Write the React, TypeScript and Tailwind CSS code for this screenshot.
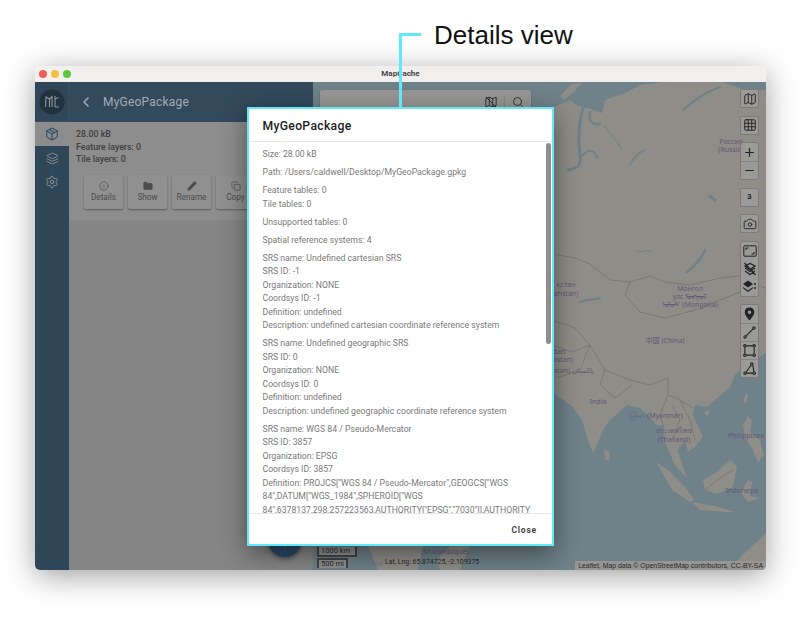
import { ChevronLeft, Copy, Folder, Info, Layers, Map as MapIcon, Minus, Pencil, Plus, Camera, Search, Settings, Grid3x3, Package } from "lucide-react";
import type { ReactNode } from "react";

const blocks: string[][] = [
  ["Size: 28.00 kB"],
  ["Path: /Users/caldwell/Desktop/MyGeoPackage.gpkg"],
  ["Feature tables: 0", "Tile tables: 0"],
  ["Unsupported tables: 0"],
  ["Spatial reference systems: 4"],
  ["SRS name: Undefined cartesian SRS", "SRS ID: -1", "Organization: NONE", "Coordsys ID: -1", "Definition: undefined", "Description: undefined cartesian coordinate reference system"],
  ["SRS name: Undefined geographic SRS", "SRS ID: 0", "Organization: NONE", "Coordsys ID: 0", "Definition: undefined", "Description: undefined geographic coordinate reference system"],
  ["SRS name: WGS 84 / Pseudo-Mercator", "SRS ID: 3857", "Organization: EPSG", "Coordsys ID: 3857", "Definition: PROJCS[\"WGS 84 / Pseudo-Mercator\",GEOGCS[\"WGS", "84\",DATUM[\"WGS_1984\",SPHEROID[\"WGS", "84\",6378137,298.257223563,AUTHORITY[\"EPSG\",\"7030\"]],AUTHORITY"],
];

const actions = [
  { label: "Details", icon: <Info size={10} strokeWidth={1.5} /> },
  { label: "Show", icon: <Folder size={10} fill="currentColor" /> },
  { label: "Rename", icon: <Pencil size={10} fill="currentColor" /> },
  { label: "Copy", icon: <Copy size={10} strokeWidth={1.5} /> },
];

function Ctl({ children }: { children: ReactNode }) {
  return (
    <div className="w-[19px] h-[19px] flex items-center justify-center text-[#222] bg-[#9a9a98] rounded-[2px] border border-[#7b7b79]">
      {children}
    </div>
  );
}

function Cell({ children, line }: { children: ReactNode; line?: boolean }) {
  return (
    <div className={`w-full h-[18px] flex items-center justify-center text-[#222] ${line ? "border-t border-[#858583]" : ""}`}>
      {children}
    </div>
  );
}

function Group({ children }: { children: ReactNode }) {
  return <div className="w-[19px] rounded-[2px] border border-[#7b7b79] bg-[#9a9a98] flex flex-col items-center">{children}</div>;
}

function Vec({ d, dots }: { d: string; dots: number[][] }) {
  return (
    <svg width="13" height="13" viewBox="0 0 14 14" fill="none" stroke="currentColor" strokeWidth="1.2">
      <path d={d} />
      {dots.map(([x, y]) => (
        <circle key={`${x}-${y}`} cx={x} cy={y} r="1.3" />
      ))}
    </svg>
  );
}

function MapLayer() {
  return (
    <svg viewBox="313 82 453 488" className="block w-full h-full" fontFamily="'Noto Sans','Noto Sans CJK SC',sans-serif">
      <rect x="313" y="82" width="453" height="488" fill="#6f8189" />
      <g fill="#8f8d88">
        <path d="M540,130 L552,108 L570,100 L578,106 L588,108 L602,113 L605,100 L625,93 L640,85 L665,82 L722,82 L745,90 L766,90 L766,353 L745,365 L735,375 L730,387 L715,400 L707,407 L695,405 L693,415 L703,437 L695,447 L688,452 L685,440 L677,450 L687,478 L675,465 L666,445 L663,425 L657,425 L650,417 L640,408 L627,405 L610,420 L603,430 L595,450 L593,453 L588,440 L582,420 L573,407 L563,400 L553,393 L540,393 Z" />
        <path d="M656,462 L668,470 L686,488 L694,500 L690,502 L672,490 Z" />
        <path d="M692,502 L715,506 L735,512 L752,512 L725,512 L700,510 Z" />
        <path d="M703,480 L717,472 L730,460 L737,466 L733,487 L717,494 L705,490 Z" />
        <path d="M741,492 L748,480 L752,482 L750,496 L760,498 L748,502 L744,497 Z" />
        <path d="M743,425 L748,416 L752,420 L750,432 L760,440 L764,455 L758,462 L752,448 L745,438 Z" />
        <path d="M604,449 L609,452 L610,459 L605,460 Z" />
        <path d="M703,412 L710,410 L708,416 Z" />
        <path d="M743,400 L747,392 L748,398 L745,404 Z" />
        <path d="M727,570 L750,548 L766,533 L766,570 Z" />
        <path d="M560,96 L572,84 L582,82 L574,92 L564,100 Z" />
        <path d="M368,546 L423,546 L418,570 L378,570 Z" />
        <path d="M437,560 L450,546 L470,546 L460,570 L440,570 Z" />
      </g>
      <g fill="none" stroke="#6f8189" strokeLinecap="round">
        <path d="M583,108 C578,125 578,140 580,155 C582,168 575,168 568,170" strokeWidth="3" />
        <path d="M583,155 C590,148 595,150 597,158" strokeWidth="2" />
        <path d="M590,112 C588,122 592,125 600,124" strokeWidth="2.5" />
        <path d="M604,125 C610,135 618,140 622,150" strokeWidth="1" />
        <path d="M630,165 C635,155 640,152 645,150" strokeWidth="1.5" />
        <path d="M720,87 C705,92 695,100 683,110" strokeWidth="2" />
        <path d="M705,250 C700,262 692,268 687,272" strokeWidth="2.5" />
        <path d="M710,196 L715,200" strokeWidth="3" />
        <path d="M580,302 C590,298 595,300 600,298" strokeWidth="2" />
        <path d="M636,250 C640,255 645,248 652,252" strokeWidth="1" />
      </g>
      <g fill="none" stroke="#777470" strokeWidth="0.8">
        <path d="M552,254 L575,258 L590,264 L610,280 L630,282 L650,276 L665,282 L690,285 L720,278 L740,276 L755,285 L766,288" />
        <path d="M630,282 L625,295 L640,312 L665,318 L695,310 L720,300 L745,290" />
        <path d="M552,345 L572,352 L590,345 L605,370 L630,380 L650,385 L668,378 L668,395 L680,400 L693,408" />
        <path d="M605,370 L600,385 L615,398 L632,385" />
        <path d="M668,395 L660,415 L664,428 M680,400 L690,420 L695,440 M672,405 L680,420 L672,440" />
        <path d="M705,490 L720,478 L733,470" />
        <path d="M552,320 L575,328 L590,345 L580,370 L556,378" />
      </g>
      <g fill="#635878" fontSize="7" textAnchor="middle">
        <text x="731" y="144">Россия</text>
        <text x="731" y="152">(Russia)</text>
        <text x="566" y="287">қстан</text>
        <text x="566" y="296">ahstan)</text>
        <text x="690" y="291">Монгол</text>
        <text x="690" y="299">улс ᠮᠤᠩᠭᠤᠯ</text>
        <text x="690" y="307">ᠤᠯᠤᠰ (Mongolia)</text>
        <text x="665" y="343">中国 (China)</text>
        <text x="559" y="354">dan</text>
        <text x="562" y="362">nistan)</text>
        <text x="574" y="373">stan) پاکستان</text>
        <text x="598" y="404">India</text>
        <text x="656" y="418">မြန်မာ (Myanmar)</text>
        <text x="674" y="433">ประเทศไทย</text>
        <text x="674" y="442">(Thailand)</text>
        <text x="746" y="438">Philippines</text>
        <text x="742" y="493">Indonesia</text>
        <text x="445" y="554">(Mozambique)</text>
        <text x="378" y="566" fill="#7a7484">Nar</text>
      </g>
    </svg>
  );
}

export default function App() {
  return (
    <div className="relative w-[800px] h-[620px] overflow-hidden bg-white font-[Roboto,sans-serif] pt-[66px]">
      <div className="absolute left-[399px] top-[33px] w-[22px] h-[2.5px] bg-[#5fe9f9] z-30" />
      <div className="absolute left-[399px] top-[33px] w-[2.5px] h-[75px] bg-[#5fe9f9] z-30" />
      <div className="absolute left-[434px] top-[19px] text-[26px] leading-[32px] text-[#111] font-['Liberation_Sans',sans-serif]">Details view</div>

      <div className="ml-[35px] w-[731px] h-[504px] rounded-[5px] overflow-hidden flex flex-col shadow-[0_6px_30px_rgba(0,0,0,0.38)]">
        <div className="relative h-[16px] bg-[#f1f0ef] flex items-center justify-center shrink-0">
          <div className="absolute left-[4px] flex gap-[4px]">
            <span className="w-[8px] h-[8px] rounded-full bg-[#ee5f57]" />
            <span className="w-[8px] h-[8px] rounded-full bg-[#f5bf40]" />
            <span className="w-[8px] h-[8px] rounded-full bg-[#5ec73f]" />
          </div>
          <span className="text-[8px] font-bold text-[#444]">MapCache</span>
        </div>

        <div className="relative flex-1 flex min-h-0">
          <div className="w-[34px] bg-[#2f4558] flex flex-col items-center shrink-0">
            <div className="h-[40px] w-full flex items-center justify-center border-r border-b border-[#3a4f61]">
              <svg width="26" height="26" viewBox="0 0 26 26">
                <circle cx="13" cy="13" r="12.5" fill="#22333f" />
                <path d="M6.5,18 L7,8 L10.5,10 L13,7.5 L13,18 M10.5,10 L10.5,18 M16,7 L16,18 M16,10 L19.5,8.5 M16,18 L20,18" fill="none" stroke="#8d969c" strokeWidth="1.1" />
              </svg>
            </div>
            <div className="h-[24px] w-full bg-[#8c8c8c] flex items-center justify-center text-[#2d4a62]">
              <Package size={14} strokeWidth={1.8} />
            </div>
            <div className="h-[24px] w-full flex items-center justify-center text-[#9a9a9a]"><Layers size={13} strokeWidth={1.5} /></div>
            <div className="h-[24px] w-full flex items-center justify-center text-[#9a9a9a]"><Settings size={14} strokeWidth={1.5} /></div>
          </div>

          <div className="w-[244px] flex flex-col shrink-0 bg-[#858585]">
            <div className="h-[40px] bg-[#33495c] flex items-center text-[#a3acb3] shrink-0">
              <ChevronLeft size={16} strokeWidth={2.2} className="ml-[9px]" />
              <span className="ml-[9px] text-[12px] tracking-[0.2px]">MyGeoPackage</span>
            </div>
            <div className="h-[98px] bg-[#8d8d8d] shrink-0 pl-[7px] pt-[6px]">
              <div className="text-[8.8px] leading-[12.6px] font-medium text-[#404040]">
                <div>28.00 kB</div>
                <div>Feature layers: 0</div>
                <div>Tile layers: 0</div>
              </div>
              <div className="flex gap-[5px] ml-[8px] mt-[9px]">
                {actions.map((a) => (
                  <div key={a.label} className="w-[39px] h-[34px] rounded-[2px] bg-[#909090] shadow-[0_1px_2px_rgba(0,0,0,0.35)] flex flex-col items-center justify-center gap-[1px] text-[#4c4c4c] text-[8.2px] leading-[11px]">
                    {a.icon}
                    <span>{a.label}</span>
                  </div>
                ))}
              </div>
            </div>
          </div>

          <div className="relative flex-1 min-w-0">
            <MapLayer />

            <div className="absolute left-[7px] top-[8px] w-[211px] h-[24px] bg-[#979694] rounded-[2px] flex items-center justify-end text-[#2a2a2a] shadow-[0_1px_2px_rgba(0,0,0,0.25)]">
              <svg width="12" height="12" viewBox="0 0 14 14" fill="none" stroke="currentColor" strokeWidth="1.1" className="mr-[7px]">
                <path d="M1,3 L5,1.5 L9,3 L13,1.5 L13,11 L9,12.5 L5,11 L1,12.5 Z M5,1.5 L5,11 M9,3 L9,12.5 M1,1 L13,13" />
              </svg>
              <div className="w-px h-[14px] bg-[#858585] mr-[7px]" />
              <Search size={12} strokeWidth={1.8} className="mr-[7px]" />
            </div>

            <div className="absolute right-[7px] top-[7px] flex flex-col gap-[7.5px]">
              <Ctl><MapIcon size={14} strokeWidth={1.6} /></Ctl>
              <Ctl><Grid3x3 size={14} strokeWidth={1.6} /></Ctl>
              <Group>
                <Cell><Plus size={13} strokeWidth={2.2} /></Cell>
                <Cell line><Minus size={13} strokeWidth={2.2} /></Cell>
              </Group>
              <Ctl><span className="text-[7.5px] font-bold">3</span></Ctl>
              <Ctl><Camera size={14} strokeWidth={1.6} /></Ctl>
              <Group>
                <Cell>
                  <svg width="14" height="12" viewBox="0 0 14 12" fill="none" stroke="currentColor" strokeWidth="1">
                    <rect x="0.8" y="0.8" width="12.4" height="10.4" rx="1" />
                    <path d="M3,5 L3,3 L5.5,3 M11,7 L11,9 L8.5,9" />
                  </svg>
                </Cell>
                <Cell>
                  <svg width="14" height="14" viewBox="0 0 14 14" fill="none" stroke="currentColor" strokeWidth="1.2">
                    <path d="M2,6 L7,9.5 L12,6 M2,9 L7,12.5 L12,9 M2,4 L7,1.5 L12,4 L7,7.5 Z M1.5,1 L12.5,13" />
                  </svg>
                </Cell>
                <Cell>
                  <svg width="15" height="13" viewBox="0 0 15 13" fill="currentColor">
                    <path d="M6,0.5 L11,4 L6,7.5 L1,4 Z" />
                    <path d="M1,7 L6,10.5 L11,7 L11,8.3 L6,12 L1,8.3 Z" />
                    <circle cx="13" cy="4" r="1" />
                    <circle cx="13" cy="8" r="1" />
                  </svg>
                </Cell>
              </Group>
              <Group>
                <Cell>
                  <svg width="11" height="14" viewBox="0 0 12 15" fill="currentColor" fillRule="evenodd">
                    <path d="M6,0.5 C2.8,0.5 0.8,2.8 0.8,5.5 C0.8,9 6,14.5 6,14.5 C6,14.5 11.2,9 11.2,5.5 C11.2,2.8 9.2,0.5 6,0.5 Z M6,3.6 A1.9,1.9 0 1 1 6,7.4 A1.9,1.9 0 1 1 6,3.6 Z" />
                  </svg>
                </Cell>
                <Cell line><Vec d="M3.2,10.8 L10.8,3.2" dots={[[2.2, 11.8], [11.8, 2.2]]} /></Cell>
                <Cell line><Vec d="M3.5,2 L10.5,2 M12,3.5 L12,10.5 M10.5,12 L3.5,12 M2,10.5 L2,3.5" dots={[[2, 2], [12, 2], [12, 12], [2, 12]]} /></Cell>
                <Cell line><Vec d="M8.8,3.5 L3.2,10.8 M10.5,3.5 L11.8,10.5 M3.5,12 L10.5,12" dots={[[9.5, 2.2], [2.2, 12], [12, 12]]} /></Cell>
              </Group>
            </div>

            <div className="absolute left-[4px] bottom-[2px] flex flex-col gap-[1px] text-[7.5px] leading-[8px] text-[#2a2a2a]">
              <div className="w-[40px] pl-[2px] border-2 border-t-0 border-[#444] bg-[#8e918f]">1000 km</div>
              <div className="w-[31px] pl-[2px] border-2 border-b-0 border-[#444] bg-[#8e918f]">500 mi</div>
            </div>
            <div className="absolute left-[72px] bottom-[3px] text-[6.9px] leading-[9px] text-[#2a2a2a]">Lat, Lng: 65.874725, -2.109375</div>
            <div className="absolute right-0 bottom-0 h-[9px] pl-[3px] pr-[3px] bg-[#979694] text-[6.9px] leading-[9px] text-[#2a2a2a] font-['Liberation_Sans',sans-serif]">
              Leaflet, Map data © OpenStreetMap contributors, CC-BY-SA
            </div>
          </div>

          <div className="absolute left-[233px] top-[441px] w-[34px] h-[34px] rounded-full bg-[#2a4a66] shadow-[0_2px_4px_rgba(0,0,0,0.4)] flex items-center justify-center text-[#a0a8b0]">
            <Plus size={20} strokeWidth={2} />
          </div>

          <div className="absolute left-[212px] top-[25px] w-[307px] h-[439px] border-[2.5px] border-[#5fe9f9] bg-white flex flex-col shadow-[0_8px_24px_rgba(0,0,0,0.45)]">
            <div className="h-[33px] shrink-0 border-b border-[#e8e8e8] pl-[13.5px] pt-[9px] text-[12.2px] leading-[16px] font-medium tracking-[0.3px] text-[#222]">MyGeoPackage</div>
            <div className="relative flex-1 min-h-0 overflow-hidden pl-[13.5px] pt-[6px] text-[8.7px] leading-[13.5px] text-[#7a7a7a]">
              {blocks.map((b, i) => (
                <div key={i} className="mb-[4.5px] whitespace-nowrap">
                  {b.map((l) => <div key={l}>{l}</div>)}
                </div>
              ))}
              <div className="absolute right-[1px] top-[1px] w-[5px] h-[201px] rounded-[3px] bg-[#8e8e8e]" />
            </div>
            <div className="h-[31px] shrink-0 border-t border-[#e8e8e8] flex items-center justify-end pr-[15px] pt-[2px]">
              <span className="text-[8.5px] font-bold tracking-[0.8px] text-[#444]">Close</span>
            </div>
          </div>
        </div>
      </div>
    </div>
  );
}
